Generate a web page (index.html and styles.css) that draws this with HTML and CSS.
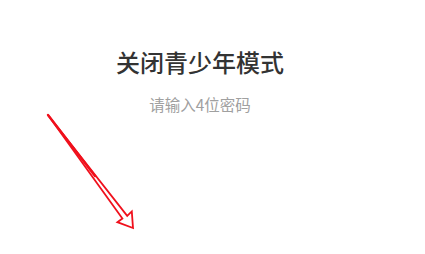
FILE: index.html
```html
<!DOCTYPE html>
<html lang="zh-CN">
<head>
<meta charset="utf-8">
<link rel="stylesheet" href="styles.css">
</head>
<body>
<div class="screen">
  <div class="panel">
    <h1 class="title">关闭青少年模式</h1>
    <p class="hint">请输入4位密码</p>
  </div>
  <svg class="arrow" width="425" height="254" viewBox="0 0 425 254">
    <path d="M48 115 L127.2 215.8 L131.8 211.4 L133 228 L117.4 222.2 L122.4 218.5 Z" fill="#fff" stroke="#f0101c" stroke-width="1.8" stroke-linejoin="miter"/>
    <line x1="48" y1="115" x2="95" y2="176" stroke="#f0101c" stroke-width="2.4" stroke-linecap="round"/>
  </svg>
</div>
</body>
</html>
```
FILE: styles.css
```css
html, body {
  margin: 0;
  padding: 0;
  background: #fff;
}
.screen {
  position: relative;
  width: 425px;
  height: 254px;
  overflow: hidden;
  font-family: "Noto Sans CJK SC", "Noto Sans", sans-serif;
}
.panel {
  width: 400px;
  padding-top: 50px;
  display: flex;
  flex-direction: column;
  align-items: center;
}
.title {
  margin: 0;
  font-size: 24px;
  line-height: 24px;
  font-weight: 500;
  color: #333;
}
.hint {
  margin: 22px 0 0;
  font-size: 15.5px;
  line-height: 16px;
  color: #a0a0a0;
}
.arrow {
  position: absolute;
  left: 0;
  top: 0;
}
```
